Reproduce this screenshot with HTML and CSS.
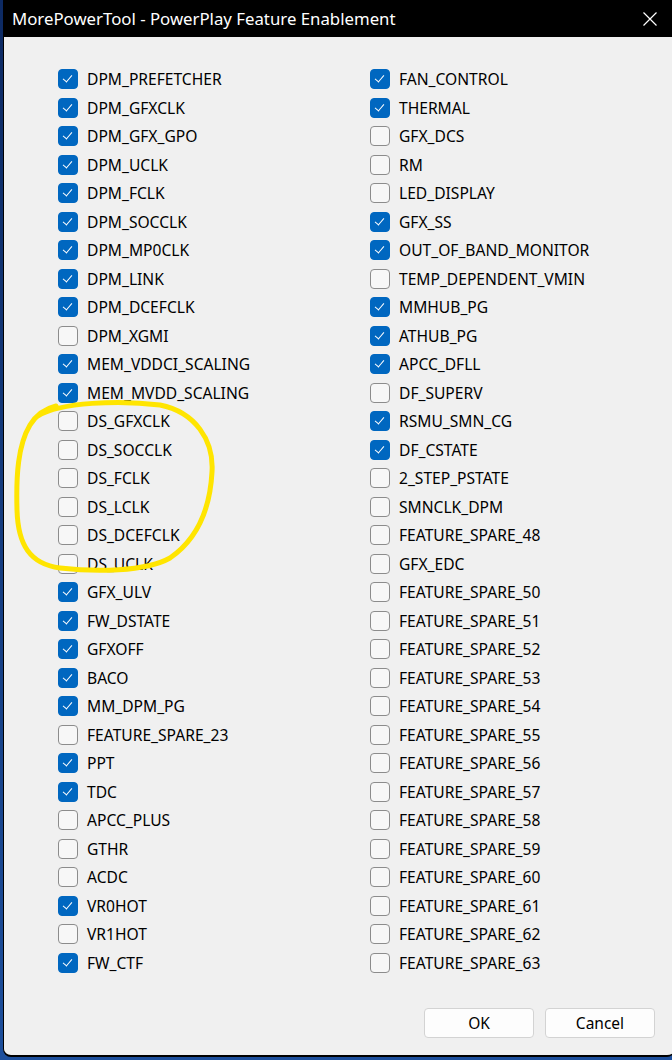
FILE: index.html
```html
<!DOCTYPE html>
<html lang="en">

<head>
    <meta charset="UTF-8">
    <meta name="viewport" content="width=device-width, initial-scale=1.0">
    <link rel="stylesheet" href="styles.css">
    <title>PowerPlay Feature Enablement</title>
</head>

<body>

    <div class="window">
        <header class="titlebar">
            <span class="title">MorePowerTool - PowerPlay Feature Enablement</span>
            <svg class="close" width="16" height="16" viewBox="0 0 16 16">
                <path d="M1.5 1.5 L14.5 14.5 M14.5 1.5 L1.5 14.5" stroke="#fff" stroke-width="1.2" fill="none" />
            </svg>
        </header>

        <div class="content">
            <div class="features">
                <div class="column">
                    <div class="feature"><span class="box on"></span>DPM_PREFETCHER</div>
                    <div class="feature"><span class="box on"></span>DPM_GFXCLK</div>
                    <div class="feature"><span class="box on"></span>DPM_GFX_GPO</div>
                    <div class="feature"><span class="box on"></span>DPM_UCLK</div>
                    <div class="feature"><span class="box on"></span>DPM_FCLK</div>
                    <div class="feature"><span class="box on"></span>DPM_SOCCLK</div>
                    <div class="feature"><span class="box on"></span>DPM_MP0CLK</div>
                    <div class="feature"><span class="box on"></span>DPM_LINK</div>
                    <div class="feature"><span class="box on"></span>DPM_DCEFCLK</div>
                    <div class="feature"><span class="box"></span>DPM_XGMI</div>
                    <div class="feature"><span class="box on"></span>MEM_VDDCI_SCALING</div>
                    <div class="feature"><span class="box on"></span>MEM_MVDD_SCALING</div>
                    <div class="feature"><span class="box"></span>DS_GFXCLK</div>
                    <div class="feature"><span class="box"></span>DS_SOCCLK</div>
                    <div class="feature"><span class="box"></span>DS_FCLK</div>
                    <div class="feature"><span class="box"></span>DS_LCLK</div>
                    <div class="feature"><span class="box"></span>DS_DCEFCLK</div>
                    <div class="feature"><span class="box"></span>DS_UCLK</div>
                    <div class="feature"><span class="box on"></span>GFX_ULV</div>
                    <div class="feature"><span class="box on"></span>FW_DSTATE</div>
                    <div class="feature"><span class="box on"></span>GFXOFF</div>
                    <div class="feature"><span class="box on"></span>BACO</div>
                    <div class="feature"><span class="box on"></span>MM_DPM_PG</div>
                    <div class="feature"><span class="box"></span>FEATURE_SPARE_23</div>
                    <div class="feature"><span class="box on"></span>PPT</div>
                    <div class="feature"><span class="box on"></span>TDC</div>
                    <div class="feature"><span class="box"></span>APCC_PLUS</div>
                    <div class="feature"><span class="box"></span>GTHR</div>
                    <div class="feature"><span class="box"></span>ACDC</div>
                    <div class="feature"><span class="box on"></span>VR0HOT</div>
                    <div class="feature"><span class="box"></span>VR1HOT</div>
                    <div class="feature"><span class="box on"></span>FW_CTF</div>
                </div>

                <div class="column">
                    <div class="feature"><span class="box on"></span>FAN_CONTROL</div>
                    <div class="feature"><span class="box on"></span>THERMAL</div>
                    <div class="feature"><span class="box"></span>GFX_DCS</div>
                    <div class="feature"><span class="box"></span>RM</div>
                    <div class="feature"><span class="box"></span>LED_DISPLAY</div>
                    <div class="feature"><span class="box on"></span>GFX_SS</div>
                    <div class="feature"><span class="box on"></span>OUT_OF_BAND_MONITOR</div>
                    <div class="feature"><span class="box"></span>TEMP_DEPENDENT_VMIN</div>
                    <div class="feature"><span class="box on"></span>MMHUB_PG</div>
                    <div class="feature"><span class="box on"></span>ATHUB_PG</div>
                    <div class="feature"><span class="box on"></span>APCC_DFLL</div>
                    <div class="feature"><span class="box"></span>DF_SUPERV</div>
                    <div class="feature"><span class="box on"></span>RSMU_SMN_CG</div>
                    <div class="feature"><span class="box on"></span>DF_CSTATE</div>
                    <div class="feature"><span class="box"></span>2_STEP_PSTATE</div>
                    <div class="feature"><span class="box"></span>SMNCLK_DPM</div>
                    <div class="feature"><span class="box"></span>FEATURE_SPARE_48</div>
                    <div class="feature"><span class="box"></span>GFX_EDC</div>
                    <div class="feature"><span class="box"></span>FEATURE_SPARE_50</div>
                    <div class="feature"><span class="box"></span>FEATURE_SPARE_51</div>
                    <div class="feature"><span class="box"></span>FEATURE_SPARE_52</div>
                    <div class="feature"><span class="box"></span>FEATURE_SPARE_53</div>
                    <div class="feature"><span class="box"></span>FEATURE_SPARE_54</div>
                    <div class="feature"><span class="box"></span>FEATURE_SPARE_55</div>
                    <div class="feature"><span class="box"></span>FEATURE_SPARE_56</div>
                    <div class="feature"><span class="box"></span>FEATURE_SPARE_57</div>
                    <div class="feature"><span class="box"></span>FEATURE_SPARE_58</div>
                    <div class="feature"><span class="box"></span>FEATURE_SPARE_59</div>
                    <div class="feature"><span class="box"></span>FEATURE_SPARE_60</div>
                    <div class="feature"><span class="box"></span>FEATURE_SPARE_61</div>
                    <div class="feature"><span class="box"></span>FEATURE_SPARE_62</div>
                    <div class="feature"><span class="box"></span>FEATURE_SPARE_63</div>
                </div>
            </div>

            <div class="buttons">
                <button class="btn">OK</button>
                <button class="btn">Cancel</button>
            </div>
        </div>
    </div>

    <!-- yellow marker scribble drawn over the screenshot -->
    <svg class="scribble" width="672" height="1060" viewBox="0 0 672 1060">
        <path d="M38 416 C60 402, 120 400, 160 405 C195 412, 214 440, 212 472 C210 510, 196 540, 170 558 C145 572, 95 572, 60 568 C30 564, 18 545, 17 510 C16 475, 18 445, 30 425 C38 412, 48 408, 56 406"
            stroke="#ffe500" stroke-width="5" fill="none" stroke-linecap="round" stroke-linejoin="round" />
    </svg>

</body>

</html>
```

FILE: styles.css
```css
body {
    margin: 0;
    padding: 0;
    width: 672px;
    height: 1060px;
    overflow: hidden;
    background: linear-gradient(to bottom, #0d2a63, #1d4f9c);
    font-family: "Noto Sans", "Open Sans", sans-serif;
    position: relative;
}

.window {
    margin-left: 3px;
    width: 671px;
    height: 1055px;
    border-left: 1px solid #000;
    border-bottom: 2px solid #000;
    border-bottom-left-radius: 8px;
    border-bottom-right-radius: 8px;
    background: #f0f0f0;
    display: flex;
    flex-direction: column;
    overflow: hidden;
}

.titlebar {
    height: 37px;
    background: #000;
    display: flex;
    align-items: center;
    justify-content: space-between;
    padding: 0 17px 0 8px;
    flex-shrink: 0;
}

.title {
    color: #fff;
    font-size: 16.8px;
}

.close {
    display: block;
}

.content {
    flex: 1;
    display: flex;
    flex-direction: column;
    padding: 28px 20px 0 54px;
}

.features {
    display: flex;
}

.column {
    flex: none;
    width: 312px;
    display: flex;
    flex-direction: column;
}

.feature {
    height: 28.5px;
    display: flex;
    align-items: center;
    gap: 9px;
    font-size: 15.6px;
    color: #000;
    white-space: nowrap;
}

.box {
    width: 18px;
    height: 18px;
    border: 1px solid #8c8c8c;
    border-radius: 4px;
    background: #f7f7f7;
    position: relative;
    flex-shrink: 0;
}

.box.on {
    background: #0067c0;
    border-color: #0067c0;
}

.box.on::after {
    content: "";
    position: absolute;
    left: 6px;
    top: 3px;
    width: 4px;
    height: 8px;
    border-right: 1.2px solid #fff;
    border-bottom: 1.2px solid #fff;
    transform: rotate(40deg);
}

.buttons {
    display: flex;
    justify-content: flex-end;
    gap: 11px;
    margin-top: 31px;
}

.btn {
    width: 110px;
    height: 30px;
    background: #fdfdfd;
    border: 1px solid #d3d3d3;
    border-radius: 4px;
    font-family: "Noto Sans", "Open Sans", sans-serif;
    font-size: 15.5px;
    color: #000;
}

.scribble {
    position: absolute;
    left: 0;
    top: 0;
}
```
